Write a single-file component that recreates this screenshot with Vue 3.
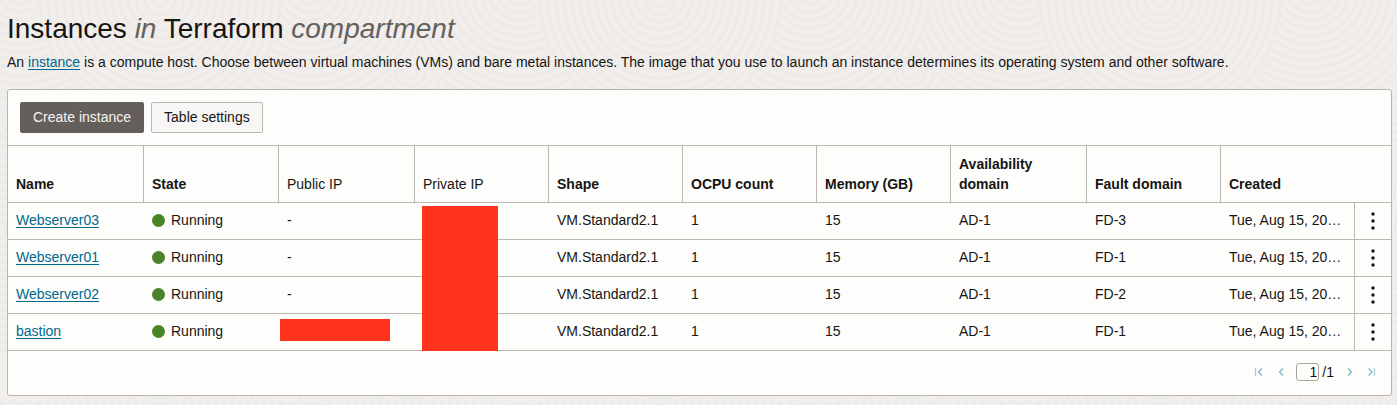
<script setup>
import { ref } from 'vue'

const page = ref(1)

const columns = [
  { label: 'Name', key: 'name' },
  { label: 'State', key: 'state' },
  { label: 'Public IP', key: 'public', light: true },
  { label: 'Private IP', key: 'private', light: true },
  { label: 'Shape', key: 'shape' },
  { label: 'OCPU count', key: 'ocpu' },
  { label: 'Memory (GB)', key: 'memory' },
  { label: 'Availability domain', key: 'ad' },
  { label: 'Fault domain', key: 'fd' },
  { label: 'Created', key: 'created' },
]

const rows = [
  { name: 'Webserver03', fd: 'FD-3' },
  { name: 'Webserver01', fd: 'FD-1' },
  { name: 'Webserver02', fd: 'FD-2' },
  { name: 'bastion', fd: 'FD-1', hidden: true },
]

const radii = Array.from({ length: 15 }, (_, i) => 120 - i * 8)
const swirls = [
  [0, 230], [250, 230], [500, 230],
  [-90, 70], [60, 50], [250, 60], [410, 70],
  [20, -12], [520, -12], [310, -12], [160, -2],
  [410, 350], [160, 350],
]
</script>

<template>
  <div class="page">
    <svg class="texture" aria-hidden="true">
      <defs>
        <pattern id="swirl" width="500" height="400" patternUnits="userSpaceOnUse">
          <g v-for="(s, i) in swirls" :key="i">
            <circle v-for="r in radii" :key="r" :cx="s[0]" :cy="s[1]" :r="r" class="ring" />
          </g>
        </pattern>
      </defs>
      <rect width="100%" height="100%" fill="url(#swirl)" />
    </svg>

    <main class="content">
      <h1>Instances <em>in</em> Terraform <em>compartment</em></h1>
      <p class="intro">
        An <a href="#instance">instance</a> is a compute host. Choose between virtual machines (VMs) and bare metal
        instances. The image that you use to launch an instance determines its operating system and other software.
      </p>

      <section class="card">
        <div class="toolbar">
          <button type="button" class="btn primary">Create instance</button>
          <button type="button" class="btn">Table settings</button>
        </div>

        <table>
          <colgroup>
            <col v-for="c in columns" :key="c.key" :class="'col-' + c.key" />
            <col class="col-menu" />
          </colgroup>
          <thead>
            <tr>
              <th
                v-for="c in columns"
                :key="c.key"
                scope="col"
                :class="{ light: c.light }"
                :colspan="c.key === 'created' ? 2 : 1"
              >{{ c.label }}</th>
            </tr>
          </thead>
          <tbody>
            <tr v-for="(r, i) in rows" :key="r.name">
              <td><a href="#details">{{ r.name }}</a></td>
              <td><span class="state"><i class="dot"></i>Running</span></td>
              <td class="cover">
                <span v-if="r.hidden" class="mask mask-public"></span>
                <template v-else>-</template>
              </td>
              <td class="cover"><span v-if="i === 0" class="mask mask-private"></span></td>
              <td>VM.Standard2.1</td>
              <td>1</td>
              <td>15</td>
              <td>AD-1</td>
              <td>{{ r.fd }}</td>
              <td class="created">Tue, Aug 15, 20…</td>
              <td class="menu">
                <button type="button" :aria-label="'Actions for ' + r.name">
                  <svg width="4" height="18" viewBox="0 0 4 18" fill="#161513">
                    <circle cx="2" cy="2" r="1.7" /><circle cx="2" cy="9" r="1.7" /><circle cx="2" cy="16" r="1.7" />
                  </svg>
                </button>
              </td>
            </tr>
          </tbody>
        </table>

        <nav class="pager" aria-label="Pagination">
          <button type="button" disabled aria-label="First page">
            <svg width="10" height="10" viewBox="0 0 10 10"><path class="bar" d="M1.500 1v8" /><path d="M8 1.500L4.500 5L8 8.500" /></svg>
          </button>
          <button type="button" disabled aria-label="Previous page">
            <svg width="10" height="10" viewBox="0 0 10 10"><path d="M7 1.500L3.500 5L7 8.500" /></svg>
          </button>
          <span class="count"><input v-model="page" type="text" aria-label="Page" />/1</span>
          <button type="button" disabled aria-label="Next page">
            <svg width="10" height="10" viewBox="0 0 10 10"><path d="M3 1.500L6.500 5L3 8.500" /></svg>
          </button>
          <button type="button" disabled aria-label="Last page">
            <svg width="10" height="10" viewBox="0 0 10 10"><path d="M1.500 1.500L5 5L1.500 8.500" /><path class="bar" d="M7.500 1v8" /></svg>
          </button>
        </nav>
      </section>
    </main>
  </div>
</template>

<style>
body {
  background: #f1eeec;
}
</style>

<style scoped>
.page {
  position: relative;
  min-height: 100vh;
  box-sizing: border-box;
  padding: 13px 5px 9px 7px;
  background: #f1eeec;
  color: #161513;
  font: 14px/20px "Helvetica Neue", "Liberation Sans", Arial, sans-serif;
}
.texture {
  position: absolute;
  inset: 0;
  width: 100%;
  height: 100%;
}
.ring {
  fill: #f1eeec;
  stroke: #ecebe9;
  stroke-width: 3;
}
.content {
  position: relative;
}
h1 {
  margin: 0;
  font-size: 28px;
  line-height: 32px;
  font-weight: 400;
}
h1 em {
  color: #65605b;
}
.intro {
  margin: 7px 0 17px;
}
a {
  color: #00688c;
  text-decoration: underline;
  text-underline-offset: 2px;
}
.card {
  background: #fdfdfb;
  border: 1px solid #bbb3ae;
  border-radius: 3px;
}
.toolbar {
  display: flex;
  gap: 7px;
  padding: 12px;
}
.btn {
  height: 31px;
  padding: 0 12px 2px;
  border: 1px solid #bcb6b1;
  border-radius: 2px;
  background: #f8f6f5;
  color: #161513;
  font: inherit;
}
.btn.primary {
  background: #655f5b;
  border-color: #655f5b;
  color: #f5f3f1;
}
table {
  width: 100%;
  table-layout: fixed;
  border-collapse: separate;
  border-spacing: 0;
  border-top: 1px solid #bcb6b1;
}
.col-name { width: 136px; }
.col-state { width: 135px; }
.col-public { width: 136px; }
.col-private { width: 134px; }
.col-shape { width: 134px; }
.col-ocpu { width: 134px; }
.col-memory { width: 134px; }
.col-ad { width: 136px; }
.col-fd { width: 134px; }
.col-created { width: 134px; }
.col-menu { width: 36px; }
th,
td {
  padding: 8px;
  border-bottom: 1px solid #bcb6b1;
  text-align: left;
  white-space: nowrap;
}
td {
  padding: 7px 8px 9px;
}
th {
  vertical-align: bottom;
  white-space: normal;
  font-weight: 700;
}
th:not(:last-child),
.created {
  border-right: 1px solid #bcb6b1;
}
th.light {
  font-weight: 400;
}
.state {
  display: flex;
  align-items: center;
  gap: 6px;
}
.dot {
  width: 13px;
  height: 13px;
  border-radius: 50%;
  background: #4a8428;
}
.cover {
  position: relative;
}
.mask {
  position: absolute;
  z-index: 1;
  background: #ff321b;
}
.mask-public {
  left: 1px;
  top: 5px;
  width: 110px;
  height: 22px;
}
.mask-private {
  left: 7px;
  top: 3px;
  width: 76px;
  height: 145px;
}
td.menu {
  padding: 0;
}
.menu button,
.pager button {
  display: flex;
  align-items: center;
  justify-content: center;
  padding: 0;
  border: 0;
  background: none;
}
.menu button {
  width: 100%;
  height: 36px;
}
.pager {
  display: flex;
  align-items: center;
  justify-content: flex-end;
  gap: 12px;
  padding: 11px 14px 13px 0;
}
.pager svg {
  fill: none;
  stroke: #7db7c9;
  stroke-width: 1.3;
}
.pager .bar {
  stroke: #a9cfdb;
}
.count {
  display: flex;
  align-items: center;
  gap: 3px;
  margin: 0 -1px 0 -2px;
}
.count input {
  box-sizing: border-box;
  width: 23px;
  height: 18px;
  padding: 0 1px;
  border: 1px solid #aaa39d;
  border-radius: 3px;
  background: #fdfdfb;
  color: inherit;
  font: inherit;
  text-align: right;
}
</style>
